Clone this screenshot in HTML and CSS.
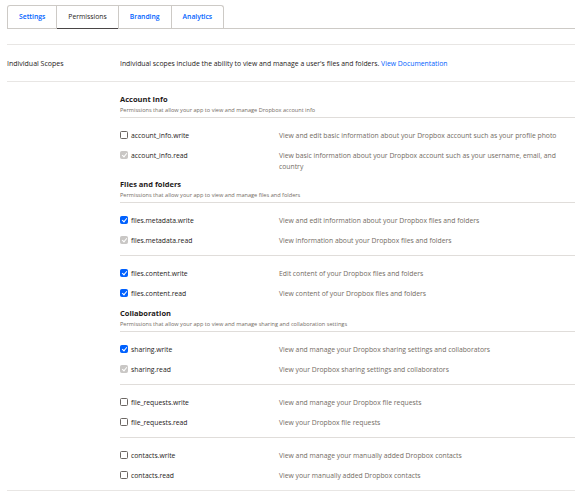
FILE: index.html
```html
<!DOCTYPE html>
<html>
<head>
<meta charset="utf-8">
<link rel="stylesheet" href="styles.css">
</head>
<body>
<div class="page">
  <div class="tabbar">
    <div class="tabs">
      <a class="tab">Settings</a>
      <a class="tab active">Permissions</a>
      <a class="tab">Branding</a>
      <a class="tab">Analytics</a>
    </div>
  </div>

  <div class="spacer"></div>

  <div class="row intro">
    <div class="label">Individual Scopes</div>
    <div class="content">Individual scopes include the ability to view and manage a user's files and folders. <a class="link">View Documentation</a></div>
  </div>

  <div class="row scopes">
    <div class="label"></div>
    <div class="content">
      <div class="section">
        <div class="sec-title">Account Info</div>
        <div class="sec-sub">Permissions that allow your app to view and manage Dropbox account info</div>
        <div class="group last">
          <div class="scope"><span class="name"><span class="cb"></span>account_info.write</span><span class="desc">View and edit basic information about your Dropbox account such as your profile photo</span></div>
          <div class="scope"><span class="name"><span class="cb checked disabled"></span>account_info.read</span><span class="desc">View basic information about your Dropbox account such as your username, email, and country</span></div>
        </div>
      </div>

      <div class="section">
        <div class="sec-title">Files and folders</div>
        <div class="sec-sub">Permissions that allow your app to view and manage files and folders</div>
        <div class="group">
          <div class="scope"><span class="name"><span class="cb checked"></span>files.metadata.write</span><span class="desc">View and edit information about your Dropbox files and folders</span></div>
          <div class="scope"><span class="name"><span class="cb checked disabled"></span>files.metadata.read</span><span class="desc">View information about your Dropbox files and folders</span></div>
        </div>
        <div class="group last">
          <div class="scope"><span class="name"><span class="cb checked"></span>files.content.write</span><span class="desc">Edit content of your Dropbox files and folders</span></div>
          <div class="scope"><span class="name"><span class="cb checked"></span>files.content.read</span><span class="desc">View content of your Dropbox files and folders</span></div>
        </div>
      </div>

      <div class="section">
        <div class="sec-title">Collaboration</div>
        <div class="sec-sub">Permissions that allow your app to view and manage sharing and collaboration settings</div>
        <div class="group">
          <div class="scope"><span class="name"><span class="cb checked"></span>sharing.write</span><span class="desc">View and manage your Dropbox sharing settings and collaborators</span></div>
          <div class="scope"><span class="name"><span class="cb checked disabled"></span>sharing.read</span><span class="desc">View your Dropbox sharing settings and collaborators</span></div>
        </div>
        <div class="group">
          <div class="scope"><span class="name"><span class="cb"></span>file_requests.write</span><span class="desc">View and manage your Dropbox file requests</span></div>
          <div class="scope"><span class="name"><span class="cb"></span>file_requests.read</span><span class="desc">View your Dropbox file requests</span></div>
        </div>
        <div class="group last">
          <div class="scope"><span class="name"><span class="cb"></span>contacts.write</span><span class="desc">View and manage your manually added Dropbox contacts</span></div>
          <div class="scope"><span class="name"><span class="cb"></span>contacts.read</span><span class="desc">View your manually added Dropbox contacts</span></div>
        </div>
      </div>
    </div>
  </div>
</div>
</body>
</html>
```

FILE: styles.css
```css
* { box-sizing: border-box; }
html, body { margin: 0; padding: 0; background: #fff; }
body {
  font-family: "Open Sans", "Liberation Sans", sans-serif;
  font-size: 7px;
  color: #1e1919;
}
.page {
  width: 568px;
  margin-left: 7px;
  padding-top: 5px;
}
.tabbar {
  border-bottom: 1px solid #cdcac6;
}
.tabs {
  display: inline-flex;
  border: 1px solid #cdcac6;
  border-bottom: none;
  border-radius: 3px 3px 0 0;
}
.tab {
  display: block;
  height: 22px;
  line-height: 22px;
  padding: 0 11px;
  color: #0061fe;
  font-weight: 600;
  font-size: 6.8px;
  border-left: 1px solid #cdcac6;
}
.tab:first-child { border-left: none; }
.tab.active {
  color: #1e1919;
  font-weight: 400;
  box-shadow: inset 0 -1px 0 #4a4646;
  margin-bottom: -1px;
  height: 23px;
}
.spacer {
  height: 16px;
  border-bottom: 1px solid #e8e6e4;
}
.row {
  display: grid;
  grid-template-columns: 113px 1fr;
  border-bottom: 1px solid #e8e6e4;
}
.intro {
  height: 37px;
  align-items: center;
}
.intro .label { line-height: 11px; }
.intro .content { line-height: 11px; font-size: 6.85px; }
.link { color: #0061fe; }
.scopes .content { padding-top: 12px; }
.sec-title {
  font-weight: 700;
  line-height: 11px;
  font-size: 7.5px;
}
.sec-sub {
  color: #736c64;
  font-size: 5.6px;
  line-height: 10px;
  padding-bottom: 2px;
  border-bottom: 1px solid #e0ddda;
}
.group {
  padding: 7px 0 5px;
  border-bottom: 1px solid #e0ddda;
}
.group.last { border-bottom: none; }
.section:first-child .group.last { padding-bottom: 3px; }
.scope {
  display: grid;
  grid-template-columns: 159px 1fr;
  padding: 4.5px 0;
  line-height: 11px;
}
.name {
  display: flex;
  align-items: center;
  height: 11px;
  font-size: 6.8px;
}
.desc {
  color: #736c64;
  font-size: 6.8px;
  padding-right: 8px;
}
.cb {
  width: 8px;
  height: 8px;
  border: 1px solid #6b6663;
  border-radius: 1.5px;
  margin-right: 3px;
  flex: none;
  position: relative;
}
.cb.checked {
  background: #0061fe;
  border-color: #0061fe;
}
.cb.checked.disabled {
  background: #c9c7c5;
  border-color: #c9c7c5;
}
.cb.checked::after {
  content: "";
  position: absolute;
  left: 2px;
  top: 0px;
  width: 2px;
  height: 4px;
  border: solid #fff;
  border-width: 0 1.2px 1.2px 0;
  transform: rotate(40deg);
}
```
